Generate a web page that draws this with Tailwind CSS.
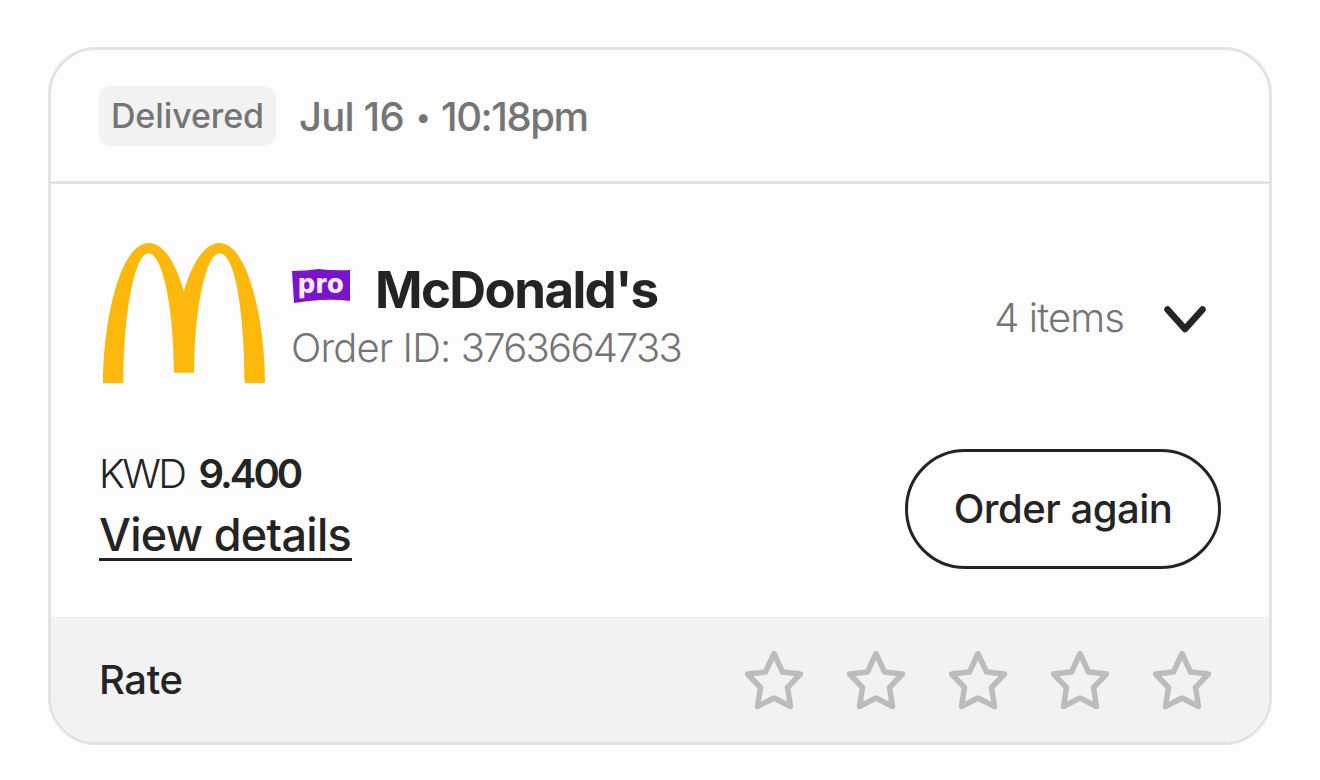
<!DOCTYPE html>
<html lang="en">
<head>
  <meta charset="UTF-8">
  <title>Order history</title>
  <meta name="viewport" content="width=device-width, initial-scale=1">
  <script src="https://cdn.jsdelivr.net/npm/@tailwindcss/browser@4"></script>
</head>
<body class="bg-[#fdfdfd] h-screen overflow-hidden px-12 pt-[47px] font-['Inter',sans-serif] text-[#242424] whitespace-nowrap">
  <article class="w-[1224px] h-[698px] flex flex-col border-3 border-[#e3e3e3] rounded-[48px] overflow-hidden">

    <!-- Status -->
    <header class="h-[134px] shrink-0 flex items-center border-b-3 border-[#e3e3e3] pl-12 text-[#757575] font-medium">
      <span class="w-[177px] h-[60px] rounded-xl bg-[#f2f2f2] flex items-center justify-center text-[34px] tracking-[-0.1px]">Delivered</span>
      <time class="ml-[23px] mt-[2px] flex items-center text-[40px] tracking-[-0.8px]">Jul 16<span class="ml-[12px] mr-[11px] text-[28px]">•</span><span class="tracking-[-1.4px]">10:18pm</span></time>
    </header>

    <!-- Order -->
    <section class="h-[433px] shrink-0 pl-12 pr-12">
      <div class="flex items-start pt-[59px] h-[265px]">
        <svg class="w-[162px] h-[140px] ml-1" viewBox="40 38 485 420" preserveAspectRatio="none" fill="#fcb90c">
          <path d="M40 458C41 260 93 38 177 38C219 38 257 93 282 183C308 93 347 38 389 38C472 38 524 260 525 458H464C463 240 435 69 389 69C347 69 313 240 313 427H252C252 240 220 69 176 69C136 69 102 240 101 458Z"/>
        </svg>
        <div class="ml-[26px] pt-[20px]">
          <div class="flex items-center h-[56px]">
            <div class="relative w-[59px] h-[35px] ml-px -mt-[9px]">
              <svg class="w-full h-full" viewBox="0 0 59 35" fill="#7a14cc">
                <path d="M0 2Q14 2 27 0Q42 2 58 1V32Q44 30 28 31Q14 32 2 34Z"/>
              </svg>
              <span class="absolute left-[6px] top-0 text-[27px] leading-[30px] font-extrabold text-[#f7eafb] tracking-[0.6px]">pro</span>
            </div>
            <h1 class="ml-[24px] -mt-[2px] text-[51px] leading-[56px] font-bold tracking-[-1.6px]">McDonald's</h1>
          </div>
          <p class="text-[40px] leading-[58px] font-light text-[#757575] tracking-[-1.75px]"><span class="tracking-[-0.9px]">Order ID: </span>3763664733</p>
        </div>
        <button class="ml-auto mt-[47px] mr-[15px] flex items-center text-[40px] leading-[56px] font-light text-[#757575] tracking-[-0.9px]">
          4 items
          <svg class="ml-[40px] mt-[2px] w-[42px] h-[27px]" viewBox="0 0 42 27" fill="none" stroke="#242424" stroke-width="6.5" stroke-linecap="round" stroke-linejoin="round">
            <path d="M3.5 3.5L21 23L38.5 3.5"/>
          </svg>
        </button>
      </div>
      <div class="flex items-start justify-between">
        <div>
          <p class="flex text-[40px] leading-[50px]"><span class="font-light tracking-[-2.6px]">KWD</span><span class="ml-[14px] font-semibold tracking-[-3px]">9.400</span></p>
          <a href="#" class="block w-[253px] h-[62px] border-b-3 border-[#242424] text-[45px] leading-[72px] font-medium tracking-[-0.7px]">View details</a>
        </div>
        <button class="w-[316px] h-[120px] rounded-full border-3 border-[#242424] text-[40px] font-medium tracking-[-0.5px]">Order again</button>
      </div>
    </section>

    <!-- Rating -->
    <footer class="flex-1 flex items-center justify-between bg-[#f2f2f2] pl-12 pr-[58px]">
      <span class="mt-px text-[40px] font-medium tracking-[-0.4px]">Rate</span>
      <div id="stars" class="flex gap-11"></div>
    </footer>
  </article>

<script>
const star = `<svg class="w-[58px] h-[60px]" viewBox="0 0 58 60" fill="none" stroke="#bcbcbc" stroke-width="5.5" stroke-linejoin="round">
  <path d="M29 3.5L37.500 22L55.5 24L42.500 37.500L45.500 56.500L29 48L12.500 56.500L15.500 37.500L2.500 24L20.500 22Z"/>
</svg>`;
document.getElementById('stars').innerHTML = star.repeat(5);
</script>
</body>
</html>
